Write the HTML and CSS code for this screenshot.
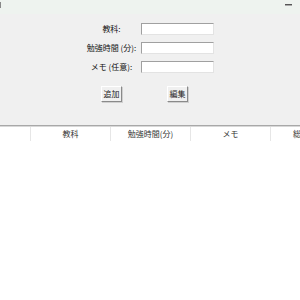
FILE: index.html
```html
<!DOCTYPE html>
<html lang="ja">
<head>
    <meta charset="UTF-8">
    <title>勉強記録</title>
    <link rel="stylesheet" href="styles.css">
</head>
<body>

<!-- Window title bar (cropped) -->
<div class="titlebar">
    <span class="title-mark"></span>
    <span class="min-btn"></span>
</div>

<!-- Input form -->
<section class="form-area">
    <div class="form-grid">
        <label class="field-label">教科:</label>
        <input class="field-input" type="text">

        <label class="field-label">勉強時間 (分):</label>
        <input class="field-input" type="text">

        <label class="field-label">メモ (任意):</label>
        <input class="field-input" type="text">

        <div class="btn-cell"><button class="tk-btn">追加</button></div>
        <div class="btn-cell"><button class="tk-btn">編集</button></div>
    </div>
</section>

<!-- Record list -->
<section class="tree">
    <div class="tree-head">
        <div class="col col-tree"></div>
        <div class="col">教科</div>
        <div class="col">勉強時間(分)</div>
        <div class="col">メモ</div>
        <div class="col col-last">総</div>
    </div>
</section>

</body>
</html>
```

FILE: styles.css
```css
body {
    margin: 0;
    padding: 0;
    width: 300px;
    height: 300px;
    overflow: hidden;
    display: flex;
    flex-direction: column;
    background-color: #fff;
    font-family: "Noto Sans CJK JP", "Noto Sans", sans-serif;
    font-size: 8px;
    color: #111;
}
.titlebar {
    height: 14px;
    flex: none;
    background-color: #eef3ef;
    display: flex;
    justify-content: space-between;
    align-items: flex-start;
}
.title-mark {
    width: 1px;
    height: 6px;
    margin-top: 2px;
    background-color: #888;
}
.min-btn {
    width: 7px;
    height: 1px;
    margin: 4px 8px 0 0;
    background-color: #555;
    border-bottom: 1px solid #aaa;
}
.form-area {
    height: 111px;
    flex: none;
    background-color: #f0f0f0;
    padding: 9px 0 0 84px;
    box-sizing: border-box;
}
.form-grid {
    display: grid;
    grid-template-columns: 55px 73px;
    grid-auto-rows: 12px;
    column-gap: 2px;
    row-gap: 7px;
    align-items: center;
}
.field-label {
    text-align: center;
    white-space: nowrap;
    line-height: 12px;
}
.field-input {
    width: 73px;
    height: 12px;
    box-sizing: border-box;
    margin: 0;
    padding: 0;
    background-color: #fff;
    border: 1px solid;
    border-color: #a0a0a0 #e3e3e3 #e3e3e3 #a0a0a0;
    outline: none;
}
.btn-cell {
    margin-top: 14px;
    height: 15px;
    display: flex;
    justify-content: center;
}
.tk-btn {
    width: 21px;
    height: 16px;
    padding: 0;
    font-family: inherit;
    font-size: 8px;
    color: #222;
    background-color: #f0f0f0;
    border: 1px solid;
    border-color: #fff #8a8a8a #8a8a8a #fff;
    box-shadow: 1px 1px 0 #d0d0d0;
}
.tree {
    flex: 1;
    min-height: 0;
    overflow: hidden;
    border-top: 1px solid #a8a8a8;
    box-shadow: inset 0 1px 0 #d8d8d8;
    background-color: #fff;
}
.tree-head {
    display: flex;
    height: 14px;
    padding-top: 1px;
    overflow: hidden;
    color: #333;
}
.col {
    width: 80px;
    flex: none;
    text-align: center;
    line-height: 14px;
    border-right: 1px solid #e6e6e6;
    box-sizing: border-box;
}
.col-tree {
    width: 31px;
}
.col-last {
    width: 29px;
    border-right: none;
    text-align: left;
    padding-left: 22px;
    overflow: hidden;
}
```
